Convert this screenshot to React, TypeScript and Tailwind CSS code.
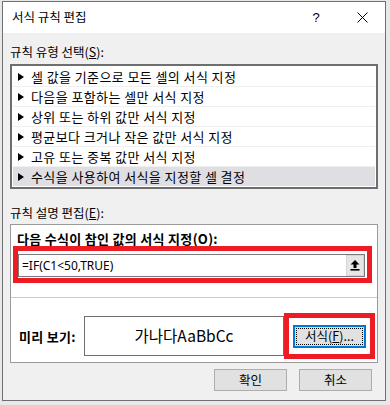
import React from 'react';

const rules = [
  '셀 값을 기준으로 모든 셀의 서식 지정',
  '다음을 포함하는 셀만 서식 지정',
  '상위 또는 하위 값만 서식 지정',
  '평균보다 크거나 작은 값만 서식 지정',
  '고유 또는 중복 값만 서식 지정',
  '수식을 사용하여 서식을 지정할 셀 결정',
];

const Arrow: React.FC = () => (
  <svg width="6" height="8" viewBox="0 0 6 8" className="shrink-0">
    <polygon points="0,0 6,4 0,8" fill="#000" />
  </svg>
);

const App: React.FC = () => {
  const selected = 5;

  return (
    <div className="w-[390px] h-[405px] overflow-hidden bg-[#e8e8e8] pl-[2px] pt-[1px] font-['Noto_Sans_CJK_KR',sans-serif] text-black">
      <div className="w-[384px] h-[400px] border border-[#707070] flex flex-col">
        {/* title bar */}
        <div className="h-[31px] bg-white flex items-center shrink-0">
          <span className="pl-[9px] text-[12.5px] leading-none">서식 규칙 편집</span>
          <div className="ml-auto flex h-full">
            <div className="w-[46px] flex items-center justify-center text-[13px] font-['Liberation_Sans',sans-serif]">?</div>
            <div className="w-[46px] flex items-center justify-center">
              <svg width="11" height="11" viewBox="0 0 11 11">
                <path d="M0.5 0.5 L10.5 10.5 M10.5 0.5 L0.5 10.5" stroke="#000" strokeWidth="1" />
              </svg>
            </div>
          </div>
        </div>

        {/* body */}
        <div className="flex-1 bg-[#f0f0f0] px-[7px] pt-[11px]">
          <div className="h-[16px] leading-[16px] text-[12.5px]">
            규칙 유형 선택(<span className="underline">S</span>):
          </div>

          <div className="mt-[4px] h-[125px] border-2 border-[#6e6e6e] bg-white p-px">
            {rules.map((r, i) => (
              <div
                key={r}
                className={
                  i === selected
                    ? 'h-[19px] flex items-center gap-[7px] pl-[5px] bg-[#dedee3] text-[13px] tracking-[0.4px]'
                    : 'h-[20px] flex items-center gap-[7px] pl-[5px] border-b border-[#efefef] text-[13px] tracking-[0.4px]'
                }
              >
                <Arrow />
                <span className="leading-none">{r}</span>
              </div>
            ))}
          </div>

          <div className="mt-[16px] h-[16px] leading-[16px] text-[12.5px]">
            규칙 설명 편집(<span className="underline">E</span>):
          </div>

          <div className="mt-[3px] h-[139px] border border-[#9a9a9a] bg-white pt-[8px] flex flex-col">
            <div className="h-[12px] leading-[12px] pl-[6px] text-[13px] tracking-[0.3px] font-bold">
              다음 수식이 참인 값의 서식 지정(O):
            </div>

            <div className="mt-px ml-[2px] w-[359px] h-[37px] border-[5px] border-[#ed1c24] pt-[3px] pr-[2px]">
              <div className="h-[23px] flex border border-[#7a7a7a] bg-white">
                <div className="flex-1 flex items-center pl-[3px] text-[12px] font-['Noto_Sans',sans-serif] leading-none">
                  =IF(C1&lt;50,TRUE)
                </div>
                <div className="w-[18px] bg-[#d6d6d6] p-px">
                  <div className="w-full h-full bg-[#e6e6e6] flex items-center justify-center">
                    <svg width="10" height="11" viewBox="0 0 10 11">
                      <polygon points="5,0 9.5,4.5 6.5,4.5 6.5,8 3.5,8 3.5,4.5 0.5,4.5" fill="#000" />
                      <rect x="0.5" y="9" width="9" height="1.6" fill="#000" />
                    </svg>
                  </div>
                </div>
              </div>
            </div>

            <div className="mt-[14px] h-px bg-[#cbcbcb]" />

            <div className="mt-[15px] flex items-center pl-[8px]">
              <div className="w-[65px] text-[13px] tracking-[0.3px] font-bold leading-none">미리 보기:</div>
              <div className="w-[200px] h-[40px] border border-[#6e6e6e] bg-white flex items-center justify-center text-[15.5px] leading-none">
                가나다AaBbCc
              </div>
              <div className="w-[91px] h-[46px] border-[5px] border-[#ed1c24] bg-white flex items-center justify-center">
                <div className="w-[73px] h-[23px] border-2 border-[#0078d7] bg-[#e1e1e1] p-px">
                  <div className="w-full h-full border border-dotted border-black flex items-center justify-center text-[12.5px] leading-none">
                    서식(<span className="underline">F</span>)...
                  </div>
                </div>
              </div>
            </div>
          </div>

          <div className="mt-[6px] flex justify-end gap-[12px] pr-[6px]">
            <div className="w-[73px] h-[22px] border border-[#adadad] bg-[#e1e1e1] flex items-center justify-center text-[12.5px] leading-none">
              확인
            </div>
            <div className="w-[73px] h-[22px] border border-[#adadad] bg-[#e1e1e1] flex items-center justify-center text-[12.5px] leading-none">
              취소
            </div>
          </div>
        </div>
      </div>
    </div>
  );
};

export default App;
